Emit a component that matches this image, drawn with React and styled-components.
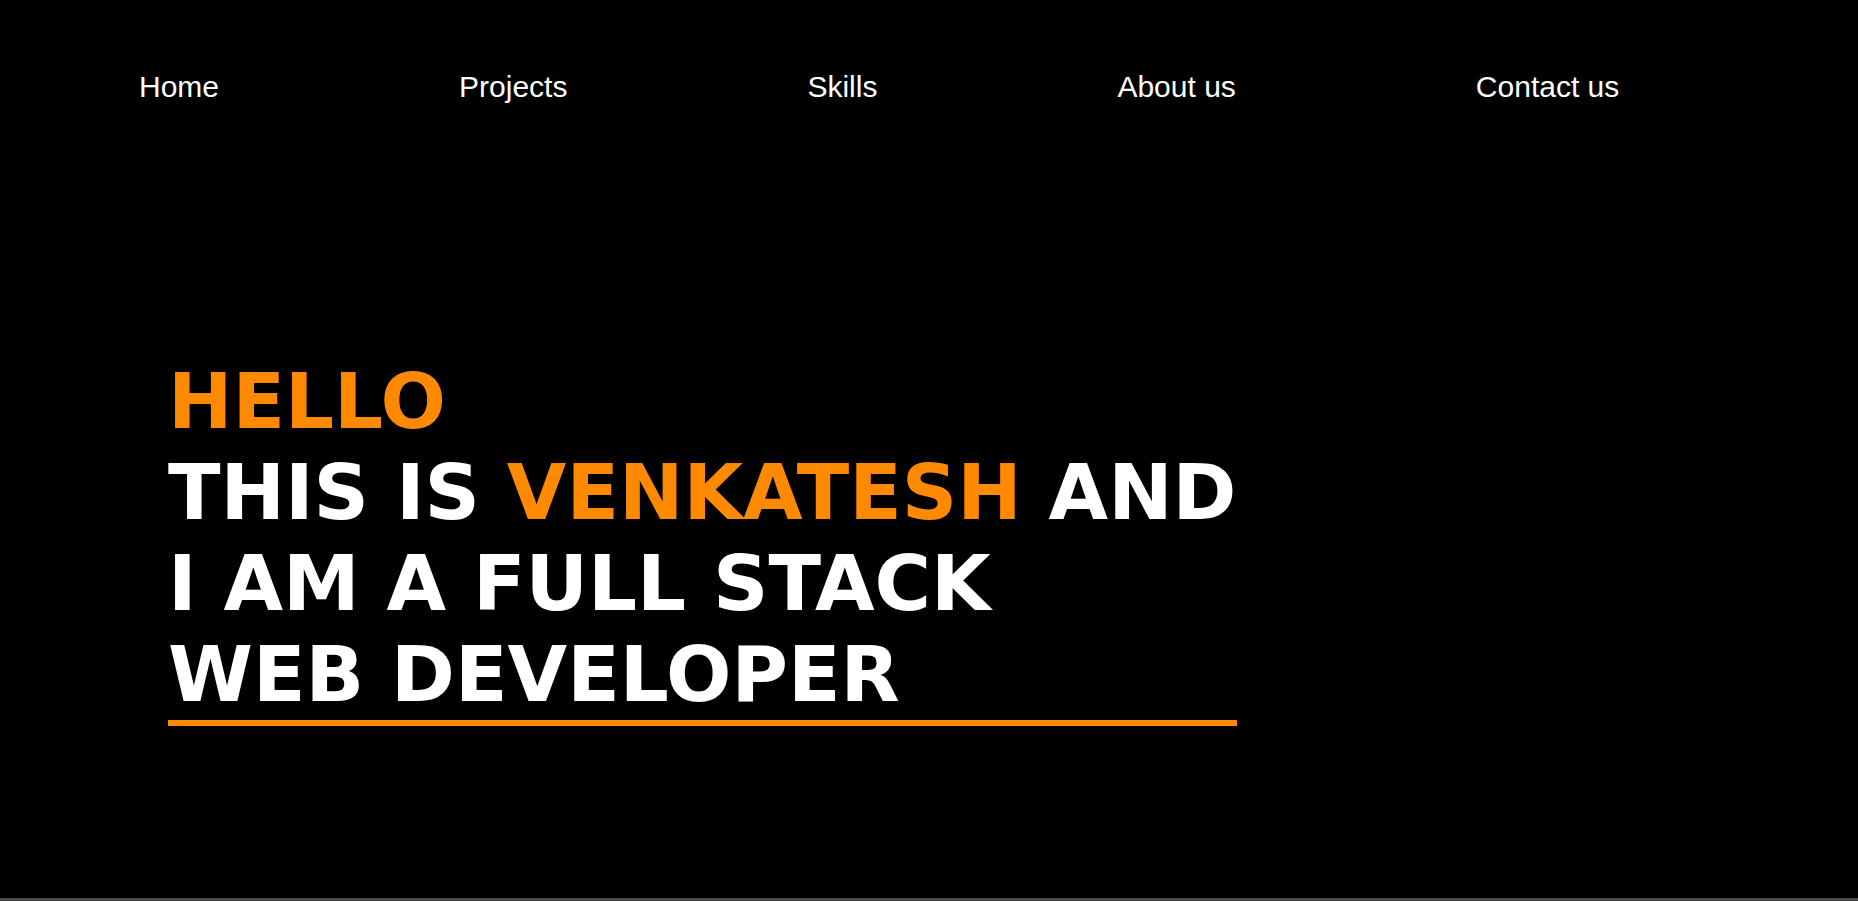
import React from 'react';
import styled, { createGlobalStyle } from 'styled-components';

const GlobalStyle = createGlobalStyle`
  html, body {
    margin: 0;
    padding: 0;
    background: #000;
  }
  * {
    box-sizing: border-box;
  }
`;

const Page = styled.div`
  min-height: 100vh;
  display: flex;
  flex-direction: column;
  background: #000;
`;

const Main = styled.main`
  flex: 1;
`;

const Nav = styled.nav`
  display: flex;
  gap: 240px;
  padding: 70px 0 0 139px;
`;

const NavLink = styled.a`
  font-family: "Liberation Sans", Arial, sans-serif;
  font-size: 30px;
  color: #fff;
  text-decoration: none;
  cursor: pointer;
`;

const Hero = styled.section`
  padding: 252px 0 0 168px;
`;

const Heading = styled.h1`
  display: inline-block;
  margin: 0;
  font-family: "DejaVu Sans", Verdana, sans-serif;
  font-weight: 700;
  font-size: 77px;
  line-height: 91px;
  color: #fff;
  border-bottom: 6px solid #ff8a00;
`;

const Accent = styled.span`
  color: #ff8a00;
`;

const BottomStrip = styled.div`
  height: 3px;
  background: #4a4a4a;
`;

const links = ['Home', 'Projects', 'Skills', 'About us', 'Contact us'];

class App extends React.PureComponent {
  render() {
    return (
      <Page>
        <GlobalStyle />
        <Main>
          <Nav>
            {links.map((l) => (
              <NavLink key={l}>{l}</NavLink>
            ))}
          </Nav>
          <Hero>
            <Heading>
              <Accent>HELLO</Accent>
              <br />
              THIS IS <Accent>VENKATESH</Accent> AND
              <br />
              I AM A FULL STACK
              <br />
              WEB DEVELOPER
            </Heading>
          </Hero>
        </Main>
        <BottomStrip />
      </Page>
    );
  }
}

export default App;
